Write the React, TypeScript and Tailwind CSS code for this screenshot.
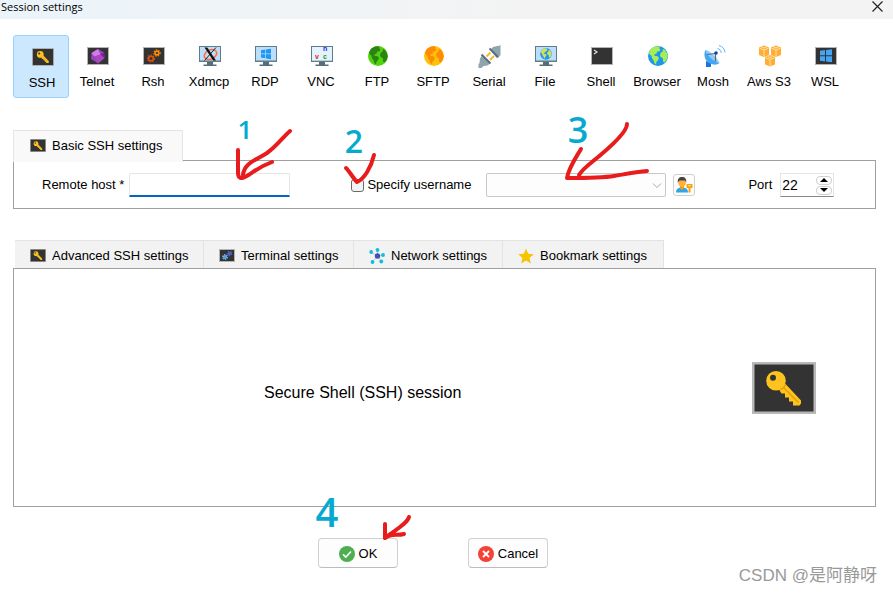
import React, { useState } from "react";

type IconProps = { className?: string };

const KeyIcon: React.FC<IconProps> = ({ className }) => (
  <svg viewBox="0 0 64 52" className={className}>
    <rect width="64" height="52" fill="#b9b9b9" />
    <rect x="2.500" y="2.500" width="59" height="47" fill="#333" />
    <path
      d="M31 21L34 22.500L49 38.500V41.500L47.500 43.500H41V39.500H37V35.500H33V31.500H29.500L27 27.500z"
      fill="#ffc31f"
    />
    <circle cx="24" cy="18.700" r="9.800" fill="#ffc31f" />
    <circle cx="21" cy="15.700" r="3" fill="#333" />
    <path d="M28 27.500c2.500-.5 4.500-2.500 5.500-5M31.500 25.500L46.500 40.500" stroke="#e3a408" strokeWidth="1.600" fill="none" />
  </svg>
);

const Screen: React.FC = () => (
  <rect x="1.500" y="2.500" width="21" height="17" fill="#333" stroke="#b5b5b5" />
);

const Monitor: React.FC = () => (
  <>
    <path d="M9 17h6v2.500h3.500V21h-13v-1.500H9z" fill="#546e7a" />
    <rect x="1" y="1" width="22" height="16" fill="#607d8b" />
    <rect x="2" y="2" width="20" height="13.500" fill="#bbdefb" />
  </>
);

const Gear: React.FC<{ cx: number; cy: number; r: number; color: string }> = ({ cx, cy, r, color }) => (
  <g stroke={color} fill="none">
    <circle cx={cx} cy={cy} r={r} strokeWidth="1.600" />
    <circle cx={cx} cy={cy} r={r + 1.2} strokeWidth="1.200" strokeDasharray="1.400 1.200" />
  </g>
);

const Globe: React.FC<{ sea: string; land: string }> = ({ sea, land }) => (
  <>
    <circle cx="12" cy="11" r="10" fill={sea} />
    <path
      fill={land}
      d="M10 1.200l4 .5-1 1.500 1.500 1-1 2-2.500.5-.5 2-2 .5 0 1.500 3 .5 1.500 1.500-1 2.500-1.500 1.500-.5 2.500-1.500-1-1-3-1.500-2-.5-2.500-2-1.500-.5-1.500 2-4L8 2zM17 4l2 1 2 3.500.7 3-1.200 3.500-2 2.500-1.500-1 0-3-1.500-1-1.500-1.500.5-3 2-1.500z"
    />
  </>
);

const Cube: React.FC<{ x: number; y: number }> = ({ x, y }) => (
  <g transform={`translate(${x} ${y})`}>
    <path d="M5 0l5 2v7.500l-5 2-5-2V2z" fill="#ffad33" />
    <path
      d="M.5 2.700l4.500 1.800 4.500-1.800M5 4.500v6.500M2.500 1.500l2.500 1 2.500-1"
      stroke="#ffe6b5"
      strokeWidth=".9"
      fill="none"
    />
  </g>
);

const drawings: Record<string, React.ReactNode> = {
  Telnet: (
    <>
      <Screen />
      <path d="M12 4l6 3.500.5 5.500-6.500 5.500L5 14l.5-6z" fill="#9c3fc4" />
      <path d="M12 4l2.500 5.500-6 2L5.500 8z" fill="#cf7de6" />
      <path d="M14.500 9.500l4 3.500-6.500 5.500-3.500-7z" fill="#ab47bc" />
      <path d="M14.500 9.500l3.500-2 .5 5.500z" fill="#7b1fa2" />
    </>
  ),
  Rsh: (
    <>
      <Screen />
      <Gear cx={15} cy={8} r={1.900} color="#ff8a00" />
      <Gear cx={9} cy={13.500} r={2.300} color="#e0500a" />
    </>
  ),
  Xdmcp: (
    <>
      <Monitor />
      <ellipse cx="12.500" cy="9.500" rx="6.500" ry="4.500" fill="none" stroke="#ff6d3a" strokeWidth="1.500" transform="rotate(-25 12.500 9.500)" />
      <path d="M6.500 2.500h2.800L18 15.500h-2.800z" fill="#111" />
      <path d="M18 2.500L6.500 15.500" stroke="#111" strokeWidth=".9" />
    </>
  ),
  RDP: (
    <>
      <Monitor />
      <path
        fill="#2196f3"
        d="M7 5.200l4.300-.7v4H7zM12 4.400l5-.7v4.800h-5zM7 9.200h4.300v4L7 12.600zM12 9.200h5v5l-5-.8z"
      />
    </>
  ),
  VNC: (
    <>
      <Monitor />
      <rect x="2" y="2" width="20" height="13.500" fill="#e3f2fd" />
      <g fontFamily="Liberation Sans, sans-serif" fontWeight="700" fontSize="7">
        <text x="5" y="14" fill="#f01818">v</text>
        <text x="13" y="6" fill="#2424e8">n</text>
        <text x="13" y="14" fill="#149c2c">c</text>
      </g>
    </>
  ),
  FTP: <Globe sea="#4fd40c" land="#2d8216" />,
  SFTP: <Globe sea="#ffc107" land="#ff8a0a" />,
  Serial: (
    <>
      <path d="M8.500 11.500l4-4M12 15l4-4" stroke="#fbb42b" strokeWidth="1.800" />
      <path d="M12.500 4.500L15 2l4-1 1.500 0L22.500 0v10l-2 2.500-2 .5z" fill="#90a4ae" />
      <path d="M4 10.500l8 8-2.500 2-4 .5-2 2H.5V19l1-1 .5-4.500z" fill="#90a4ae" />
      <path d="M11.500 3.500l8.500 8.500M3.500 9.500l9 9" stroke="#546e7a" strokeWidth="1.800" />
    </>
  ),
  File: (
    <>
      <Monitor />
      <g transform="translate(5 2.500) scale(.58)">
        <Globe sea="#2196f3" land="#d4e157" />
      </g>
    </>
  ),
  Shell: (
    <>
      <Screen />
      <path d="M4 5l3 2-3 2" stroke="#e0e0e0" strokeWidth="1.200" fill="none" />
    </>
  ),
  Browser: <Globe sea="#1e96f0" land="#a4ef52" />,
  Mosh: (
    <>
      <path d="M4 16l5 2v4H4z" fill="#1976d2" />
      <path d="M3.500 5C1 10 3 16 8 18.500c3.500 1.700 7 1.500 9.500-.5z" fill="#42a5f5" />
      <path d="M3.500 5c3-1 13 9 14 13-4 0-14-8-14-13z" fill="#90caf9" />
      <path d="M13.500 8.500L5 9.500M13.500 8.500v8" stroke="#546e7a" strokeWidth="1.200" />
      <circle cx="14" cy="8" r="1.800" fill="#0d47a1" />
      <path d="M15.500 3.500c2 .5 3.500 2 3.800 4.500M17 .5c3.500.8 5.800 3.500 6 7" stroke="#64b5f6" strokeWidth="1" fill="none" />
    </>
  ),
  "Aws S3": (
    <>
      <Cube x={1} y={.5} />
      <Cube x={13} y={.5} />
      <Cube x={7} y={10} />
    </>
  ),
  WSL: (
    <>
      <Screen />
      <path fill="#42a5f5" d="M6 5.700l5-.7v5.300H6zM12 4.900l6-.7v6.100h-6zM6 11.200h5v5.300l-5-.7zM12 11.200h6v6.100l-6-.7z" />
    </>
  ),
};

const sessions = [
  "SSH", "Telnet", "Rsh", "Xdmcp", "RDP", "VNC", "FTP", "SFTP",
  "Serial", "File", "Shell", "Browser", "Mosh", "Aws S3", "WSL",
];

const TerminalIcon: React.FC<IconProps> = ({ className }) => (
  <svg viewBox="0 0 16 13" className={className}>
    <rect x=".5" y=".5" width="15" height="12" fill="#333" stroke="#b5b5b5" />
    <Gear cx={10.500} cy={4.500} r={1} color="#5363c8" />
    <Gear cx={6} cy={8} r={1.300} color="#64b5f6" />
  </svg>
);

const NetworkIcon: React.FC<IconProps> = ({ className }) => (
  <svg viewBox="0 0 16 16" className={className}>
    <path d="M8.500 8V2M8.500 8L2 4M8.500 8l5.500-1M8.500 8l-5 6M8.500 8l4 5.500" stroke="#b0bec5" strokeWidth=".8" />
    <circle cx="8.500" cy="8" r="2.700" fill="#3f51b5" />
    <g fill="#13bcd8">
      <circle cx="8.500" cy="2" r="1.900" />
      <circle cx="2.200" cy="4" r="1.900" />
      <circle cx="14" cy="7" r="1.900" />
      <circle cx="3.500" cy="14" r="1.900" />
      <circle cx="12.300" cy="13.500" r="1.900" />
    </g>
  </svg>
);

const StarIcon: React.FC<IconProps> = ({ className }) => (
  <svg viewBox="0 0 16 16" className={className}>
    <path d="M8 .5l2.200 5.300 5.600.4-4.300 3.700 1.400 5.600L8 12.500l-4.900 3 1.400-5.600L.2 6.200l5.600-.4z" fill="#f5c400" />
  </svg>
);

const UserKeyIcon: React.FC<IconProps> = ({ className }) => (
  <svg viewBox="0 0 17 16" className={className}>
    <path d="M0 15.500c0-3.500 2-5 6-5s6 1.500 6 5z" fill="#29a9e8" />
    <path d="M4 8.500h4v3L6 13l-2-1.500z" fill="#ff9800" />
    <ellipse cx="6" cy="5.500" rx="3.800" ry="4.500" fill="#ffb13d" />
    <path d="M1.800 5.500C1.500 2 3 0 6 0s4.700 2 4.200 5.500L9 3.500H3.500z" fill="#424242" />
    <path fillRule="evenodd" d="M10.500 7h6v4h-2v4.500h-2V11h-2zM12.500 8.200v1h2v-1z" fill="#ff9f0a" />
  </svg>
);

const tabs = [
  { label: "Advanced SSH settings", icon: <KeyIcon className="h-[13px] w-4" />, width: "w-[189px]" },
  { label: "Terminal settings", icon: <TerminalIcon className="h-[13px] w-4" />, width: "w-[150px]" },
  { label: "Network settings", icon: <NetworkIcon className="size-4" />, width: "w-[149px]" },
  { label: "Bookmark settings", icon: <StarIcon className="size-4" />, width: "w-[161px]" },
];

const Annotations: React.FC = () => (
  <svg width="893" height="593" className="pointer-events-none absolute top-0 left-0">
    <g stroke="#e81c1c" strokeWidth="4" strokeLinecap="round" strokeLinejoin="round" fill="none">
      <path d="M290 131C282 138 277 146 267 153C256 160 244 163 243 175" />
      <path d="M238 150V173C238 178 241 179 245 177C253 173 256 168 272 162" />
      <path d="M346 168C350 172 353 178 357 182C364 179 371 168 374 155" />
      <path d="M627 124C627 134 602 154 592 162C587 166 582 170 579 175" />
      <path d="M581 149C575 159 569 167 567 178C580 178 602 178 614 176C626 174 636 172 647 171" />
      <path d="M409 517C407 524 395 530 385 538" />
      <path d="M385 524V538C391 533 397 536 404 534" />
    </g>
    <g fill="#06a9d0" fontFamily="Open Sans, sans-serif" fontWeight="600" textAnchor="middle">
      <text x="245" y="139" fontSize="26">1</text>
      <text x="354" y="153" fontSize="32">2</text>
      <text x="578" y="143" fontSize="36">3</text>
      <text x="327" y="527" fontSize="40">4</text>
    </g>
  </svg>
);

const App: React.FC = () => {
  const [session, setSession] = useState("SSH");
  const [host, setHost] = useState("");
  const [withUser, setWithUser] = useState(false);
  const [port, setPort] = useState(22);

  return (
    <div className="relative min-h-screen bg-white font-['Liberation_Sans',Arial,sans-serif] text-[13px] leading-4 text-black">
      <header className="flex h-[19px] items-center justify-between bg-linear-to-r from-[#ebf4fa] to-[#f3f3f3] to-60% pr-[9px] pb-1.5 pl-px">
        <h1 className="font-['Open_Sans',sans-serif] text-[11px]">Session settings</h1>
        <button type="button" aria-label="Close">
          <svg viewBox="0 0 13 13" className="size-[13px]">
            <path d="M1.500 1.500l10 10M11.500 1.500l-10 10" stroke="#222" strokeWidth="1.200" />
          </svg>
        </button>
      </header>

      <nav className="mt-4 flex pl-[13px]">
        {sessions.map((name) => (
          <button
            key={name}
            type="button"
            onClick={() => setSession(name)}
            className={`flex h-[63px] w-14 shrink-0 flex-col items-center gap-[5px] rounded-[3px] border whitespace-nowrap ${
              name === session ? "border-[#99d1ff] bg-[#cce8ff] pt-2.5 pl-0.5" : "border-transparent pt-[9px]"
            }`}
          >
            {name === "SSH" ? (
              <span className="ml-0.5 flex h-6 items-center pb-0.5">
                <KeyIcon className="h-[18px] w-[22px]" />
              </span>
            ) : (
              <svg viewBox="0 0 24 24" className="ml-0.5 size-6 shrink-0">{drawings[name]}</svg>
            )}
            <span>{name}</span>
          </button>
        ))}
      </nav>

      <main className="mt-8 mr-[17px] ml-[13px]">
        <section>
          <div className="relative -mb-0.5 flex h-8 w-[170px] items-center gap-1.5 border border-b-0 border-[#e5e5e5] bg-[#f9f9f9] pb-0.5 pl-4">
            <KeyIcon className="h-[13px] w-4" />
            <h2>Basic SSH settings</h2>
          </div>
          <div className="flex items-center border border-[#a0a0a0] pt-3 pb-[11px] pl-7">
            <label htmlFor="host">Remote host *</label>
            <input
              id="host"
              value={host}
              onChange={(e) => setHost(e.target.value)}
              className="ml-[5px] h-6 w-[161px] rounded-t-[2px] border border-b-2 border-[#e5e5e5] border-b-[#0067c0] px-1 outline-none"
            />
            <input
              id="specify"
              type="checkbox"
              checked={withUser}
              onChange={(e) => setWithUser(e.target.checked)}
              className="ml-[61px] size-[13px] appearance-none rounded-[3px] border border-[#6b6b6b] bg-[#f3f3f3] checked:bg-[#0067c0]"
            />
            <label htmlFor="specify" className="ml-[3px]">Specify username</label>
            <div className="relative ml-[15px]">
              <select
                aria-label="Username"
                disabled={!withUser}
                className="block h-6 w-[180px] appearance-none rounded-[2px] border border-[#c8c8c8] bg-[#fdfdfd]"
              />
              <svg viewBox="0 0 10 6" className="pointer-events-none absolute top-2.5 right-1 h-1.5 w-2.5">
                <path d="M1 .5l4 4 4-4" stroke="#a6a6a6" fill="none" />
              </svg>
            </div>
            <button
              type="button"
              aria-label="Manage users"
              className="ml-[7px] flex size-[22px] items-center justify-center rounded-[3px] border border-[#d0d0d0] bg-[#fdfdfd]"
            >
              <UserKeyIcon className="h-4 w-[17px]" />
            </button>
            <label htmlFor="port" className="ml-[53px]">Port</label>
            <div className="ml-2 flex h-6 w-[54px] items-center justify-between border border-[#e5e5e5] border-b-[#868686] pr-px">
              <input
                id="port"
                inputMode="numeric"
                value={port}
                onChange={(e) => setPort(Number(e.target.value) || 0)}
                className="w-8 pl-px text-sm outline-none"
              />
              <div className="flex flex-col gap-px">
                <button type="button" aria-label="Increase port" onClick={() => setPort(port + 1)} className="flex h-[9px] w-4 items-center justify-center rounded-[4px] border border-[#d0d0d0]">
                  <svg viewBox="0 0 8 4" className="h-1 w-2 shrink-0"><path d="M4 0l4 4H0z" /></svg>
                </button>
                <button type="button" aria-label="Decrease port" onClick={() => setPort(port - 1)} className="flex h-[9px] w-4 items-center justify-center rounded-[4px] border border-[#d0d0d0]">
                  <svg viewBox="0 0 8 4" className="h-1 w-2 shrink-0"><path d="M4 4l4-4H0z" /></svg>
                </button>
              </div>
            </div>
          </div>
        </section>

        <section className="mt-[31px]">
          <div className="flex pl-0.5">
            {tabs.map((tab) => (
              <button
                key={tab.label}
                type="button"
                className={`flex h-7 shrink-0 items-center gap-1.5 border-t border-r border-[#e3e3e3] bg-[#f2f2f2] pt-0.5 pl-[15px] whitespace-nowrap ${tab.width}`}
              >
                {tab.icon}
                {tab.label}
              </button>
            ))}
          </div>
          <div className="flex min-h-[239px] items-center justify-between border border-[#a0a0a0] pr-[59px] pl-[250px]">
            <p className="pt-2.5 text-base">Secure Shell (SSH) session</p>
            <KeyIcon className="h-[52px] w-16" />
          </div>
        </section>
      </main>

      <footer className="mt-[31px] flex justify-center gap-[70px] pr-[27px]">
        <button type="button" className="flex h-[30px] w-20 items-center justify-center gap-1 rounded-[4px] border border-[#d0d0d0] border-b-[#bcbcbc] bg-[#fdfdfd] pt-px">
          <svg viewBox="0 0 16 16" className="size-4">
            <circle cx="8" cy="8" r="8" fill="#4caf50" />
            <path d="M4 8.300l2.800 2.700L12 5.500" stroke="#fff" strokeWidth="1.600" fill="none" />
          </svg>
          OK
        </button>
        <button type="button" className="flex h-[30px] w-20 items-center justify-center gap-1 rounded-[4px] border border-[#d0d0d0] border-b-[#bcbcbc] bg-[#fdfdfd] pt-px">
          <svg viewBox="0 0 16 16" className="size-4">
            <circle cx="8" cy="8" r="8" fill="#f44336" />
            <path d="M5 5l6 6M11 5l-6 6" stroke="#fff" strokeWidth="1.800" />
          </svg>
          Cancel
        </button>
      </footer>

      <Annotations />
      <p className="absolute right-4 bottom-[7px] font-['Liberation_Sans','Noto_Sans_CJK_SC',sans-serif] text-[17px] leading-5 text-[#999]">
        CSDN @是阿静呀
      </p>
    </div>
  );
};

export default App;
